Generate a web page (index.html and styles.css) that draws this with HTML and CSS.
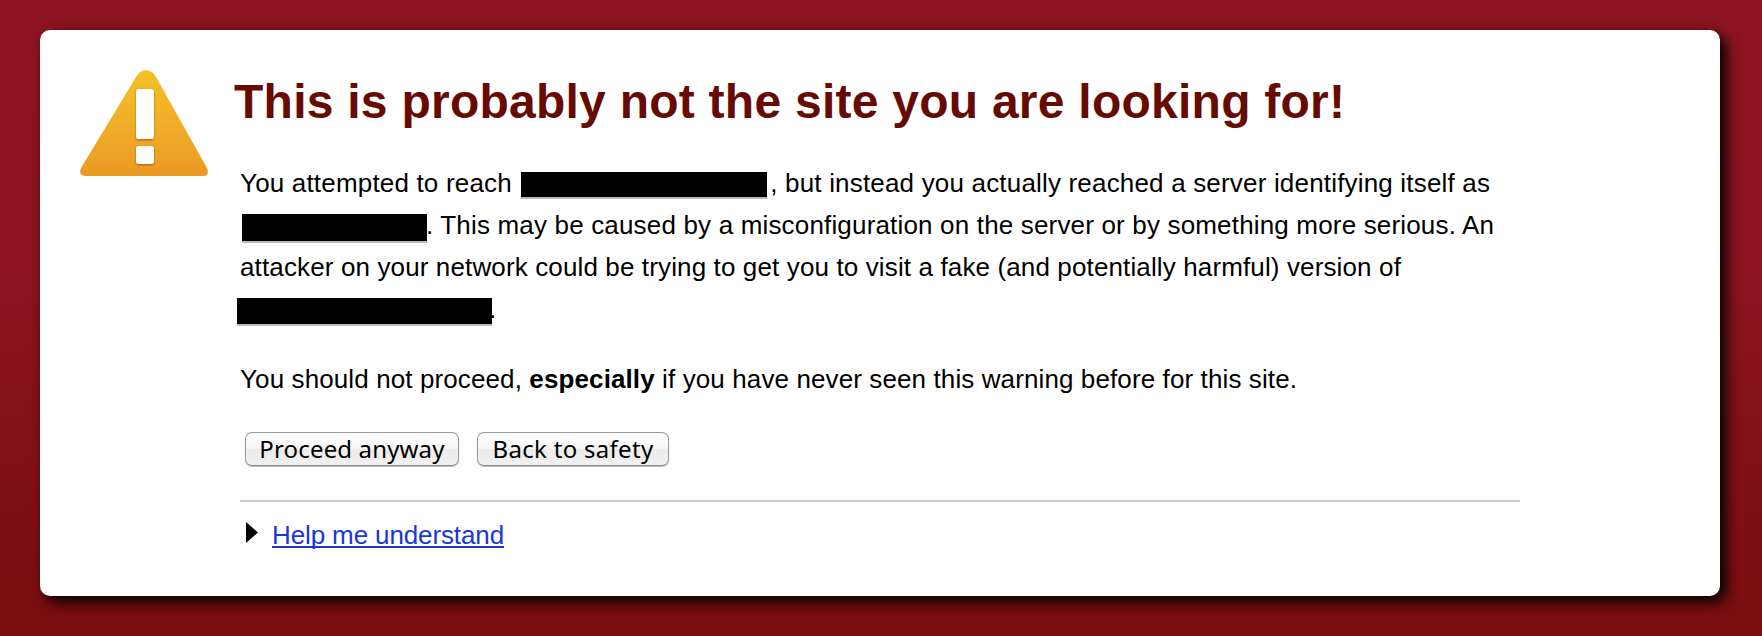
FILE: index.html
```
<!DOCTYPE html>
<html>
<head>
  <meta charset="utf-8">
  <title>SSL Error</title>
  <link rel="stylesheet" href="styles.css">
</head>
<body>
  <div class="box">
    <svg class="icon" width="128" height="106" viewBox="0 0 128 106">
      <defs>
        <linearGradient id="amber" x1="0" y1="0" x2="0" y2="1">
          <stop offset="0" stop-color="#f5c026"/>
          <stop offset="0.5" stop-color="#f0ae2a"/>
          <stop offset="1" stop-color="#eb9a22"/>
        </linearGradient>
        <filter id="drop" x="-30%" y="-30%" width="160%" height="160%">
          <feDropShadow dx="0" dy="1" stdDeviation="1" flood-color="#7a4a00" flood-opacity="0.7"/>
        </filter>
      </defs>
      <path d="M59 3 Q66 -3 73 3 L76 7 L127 98 Q130 106 123 106 L5 106 Q-2 105 1 98 L56 7 Z" fill="url(#amber)"/>
      <g fill="#fff" filter="url(#drop)">
        <rect x="56" y="19" width="18" height="50" rx="3"/>
        <rect x="56" y="76" width="18" height="18" rx="3"/>
      </g>
    </svg>
    <div class="content">
      <h1>This is probably not the site you are looking for!</h1>
      <p>
        <span class="line l1">You attempted to reach <i class="redacted host"></i>, but instead you actually reached a server identifying itself as</span>
        <span class="line l2"><i class="redacted server"></i>. This may be caused by a misconfiguration on the server or by something more serious. An</span>
        <span class="line l3">attacker on your network could be trying to get you to visit a fake (and potentially harmful) version of</span>
        <span class="line l4"><i class="redacted target"></i>.</span>
      </p>
      <p class="advice">You should not proceed, <strong>especially</strong> if you have never seen this warning before for this site.</p>
      <div class="buttons">
        <button class="proceed">Proceed anyway</button>
        <button class="back">Back to safety</button>
      </div>
      <div class="more">
        <svg class="twisty" width="12" height="21" viewBox="0 0 12 21"><path d="M0 0 L12 10.5 L0 21 Z"/></svg>
        <a href="#">Help me understand</a>
      </div>
    </div>
  </div>
</body>
</html>
```
FILE: styles.css
```
html {
  height: 100%;
}
body {
  box-sizing: border-box;
  height: 100%;
  margin: 0;
  padding: 30px 42px 40px 40px;
  background: linear-gradient(#8d1421, #8b1420 40%, #780e10);
  font-family: "Liberation Sans", Arial, sans-serif;
  font-size: 26px;
  color: #000;
}
.box {
  display: flex;
  box-sizing: border-box;
  height: 566px;
  padding: 40px;
  background: #fff;
  border-radius: 10px;
  box-shadow: 6px 6px 14px #000;
}
.icon {
  flex: none;
}
.content {
  width: 1280px;
  margin-left: 32px;
}
h1 {
  margin: 4px 0 0 -6px;
  font-size: 48px;
  line-height: 56px;
  letter-spacing: .25px;
  color: #660a02;
  white-space: nowrap;
}
p {
  margin: 32px 0 0;
  line-height: 42px;
}
.line {
  display: block;
  white-space: nowrap;
}
.l1 {
  letter-spacing: .18px;
}
.l2 {
  letter-spacing: .17px;
}
.l3 {
  letter-spacing: .13px;
}
.redacted {
  display: inline-block;
  background: #000;
  box-shadow: 0 2px 0 #bbb;
}
.host {
  width: 246px;
  height: 25px;
  margin: 0 3px -5px 2px;
}
.server {
  width: 185px;
  height: 27px;
  margin: 0 -1px -7px 2px;
}
.target {
  width: 255px;
  height: 26px;
  margin: 0 -3px -6px -3px;
}
.advice {
  margin-top: 28px;
  letter-spacing: .11px;
}
.buttons {
  display: flex;
  gap: 18px;
  padding: 32px 0 0 5px;
}
button {
  box-sizing: border-box;
  height: 34px;
  padding: 0;
  border: 1px solid #999;
  border-bottom-color: #888;
  border-radius: 7px;
  background: linear-gradient(#fff, #f6f6f6 48%, #ebebeb 52%, #f1f1f1);
  box-shadow: 0 1px 1px #bbb;
  font-family: "Noto Sans", sans-serif;
  font-size: 24px;
  line-height: 30px;
  color: #000;
}
.proceed {
  width: 214px;
  letter-spacing: .15px;
}
.back {
  width: 192px;
  letter-spacing: .3px;
}
.more {
  display: flex;
  align-items: flex-start;
  margin-top: 34px;
  padding: 20px 0 0 6px;
  border-top: 2px solid #ccc;
}
.more a {
  margin-left: 14px;
  line-height: 26px;
  letter-spacing: -.12px;
  color: #1a36d9;
  text-decoration-thickness: 2px;
  text-underline-offset: 2px;
  text-decoration-skip-ink: none;
}
```
